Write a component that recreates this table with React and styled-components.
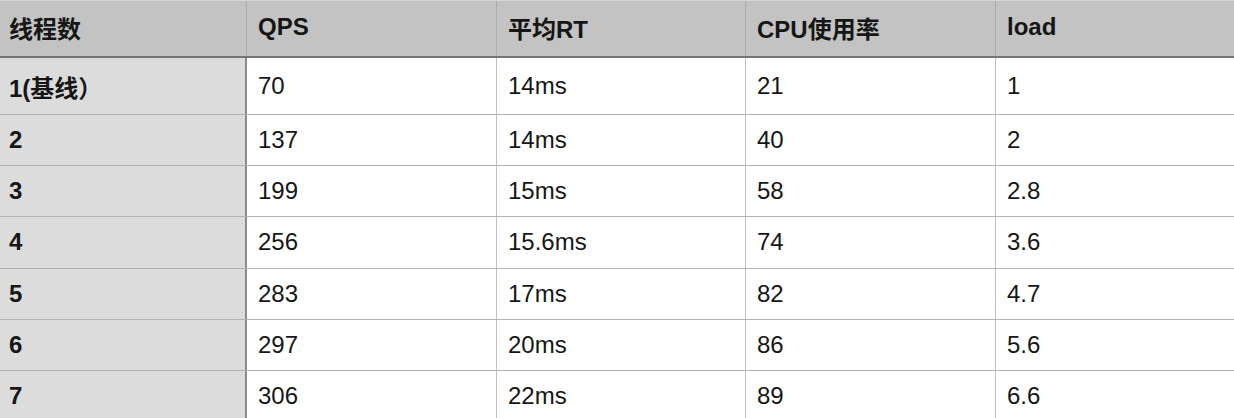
import styled, { createGlobalStyle } from 'styled-components'

const GlobalStyle = createGlobalStyle`
body{margin:0;background:#ffffff;}
`

const heads = ['线程数', 'QPS', '平均RT', 'CPU使用率', 'load']
const rows = [
    ['1(基线）', '70', '14ms', '21', '1'],
    ['2', '137', '14ms', '40', '2'],
    ['3', '199', '15ms', '58', '2.8'],
    ['4', '256', '15.6ms', '74', '3.6'],
    ['5', '283', '17ms', '82', '4.7'],
    ['6', '297', '20ms', '86', '5.6'],
    ['7', '306', '22ms', '89', '6.6'],
]

export default function App(){
    return(
        <Page>
            <GlobalStyle/>
            <Grid>
                <HeadRow>
                    {heads.map((h,i)=>(
                        <HeadCell key={h} col={i}>{h}</HeadCell>
                    ))}
                </HeadRow>
                {rows.map((r,ri)=>(
                    <Row key={ri} first={ri===0}>
                        {r.map((c,i)=>(
                            <Cell key={i} col={i}>{c}</Cell>
                        ))}
                    </Row>
                ))}
            </Grid>
        </Page>
    )
}

const widths=['247px','250px','249px','250px','1fr']

const Page=styled.div`
width:1234px;height:418px;overflow:hidden;
font-family:"Liberation Sans","Noto Sans CJK SC",sans-serif;
color:#161616;
`
const Grid=styled.div`
display:flex;flex-direction:column;
`
const HeadRow=styled.div`
display:grid;grid-template-columns:${widths.join(' ')};
height:58px;box-sizing:border-box;
background:#c2c3c2;
border-top:1px solid #d4d5d4;
border-bottom:2px solid #747474;
`
const HeadCell=styled.div`
display:flex;align-items:center;padding-left:${p=>p.col===0?'9px':'11px'};
padding-bottom:3px;
font-size:24px;font-weight:bold;
border-right:${p=>p.col===4?'0':'1px solid #a9aaa9'};
`
const Row=styled.div`
display:grid;grid-template-columns:${widths.join(' ')};
height:${p=>p.first?'57px':'51.2px'};box-sizing:border-box;
border-bottom:1px solid #b3b3b3;
`
const Cell=styled.div`
display:flex;align-items:center;padding-left:${p=>p.col===0?'9px':'11px'};
font-size:24px;
font-weight:${p=>p.col===0?'bold':'normal'};
background:${p=>p.col===0?'#dcdcdc':'#ffffff'};
border-right:${p=>p.col===0?'2px solid #8a8a8a':p.col===4?'0':'1px solid #c0c0c0'};
`
